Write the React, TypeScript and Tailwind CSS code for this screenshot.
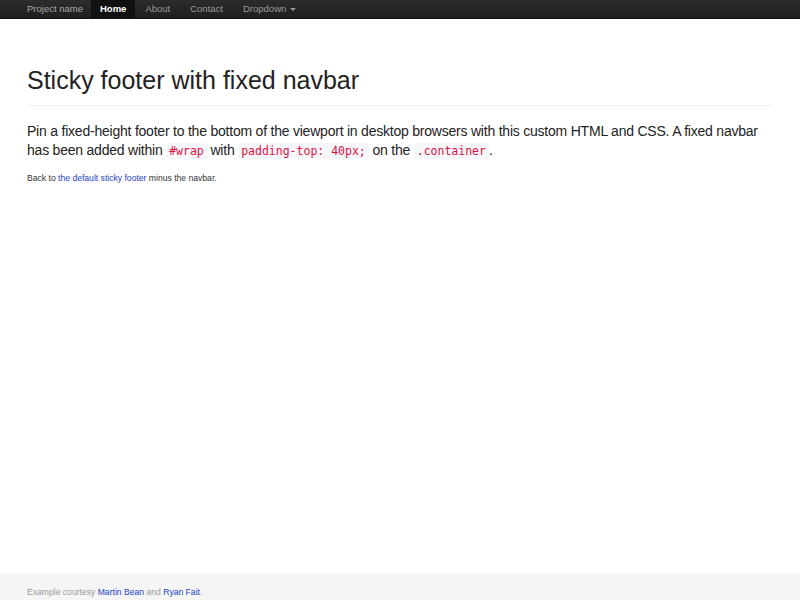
export default function App() {
  const codeCls =
    "inline-block font-['DejaVu_Sans_Mono',monospace] text-[11.5px] leading-[16px] tracking-normal text-[#d14] bg-[#f7f7f9] px-[3px] rounded-[2px] align-baseline";
  return (
    <div className="min-h-screen flex flex-col bg-white text-[#222] font-['Liberation_Sans',Arial,sans-serif]">
      <nav className="fixed top-0 inset-x-0 h-[19px] bg-gradient-to-b from-[#2c2c2c] to-[#1f1f1f] border-b border-[#121212] z-10">
        <div className="flex items-stretch h-full pl-[27px] text-[9.5px] text-[#999]">
          <a className="flex items-center pr-[8px] text-[#aaa]">Project name</a>
          <a className="flex items-center px-[9px] bg-[#111] text-white font-bold">Home</a>
          <a className="flex items-center px-[10px]">About</a>
          <a className="flex items-center px-[10px]">Contact</a>
          <a className="flex items-center px-[10px] gap-[4px]">
            Dropdown
            <span className="inline-block w-0 h-0 border-x-[3px] border-x-transparent border-t-[3px] border-t-[#999]" />
          </a>
        </div>
      </nav>

      <main className="flex-1 pt-[19px]">
        <div className="mx-[27px] pt-[45px]">
          <h1 className="text-[25px] leading-[32px] font-normal pb-[9px] border-b border-[#eee] text-[#222]">
            Sticky footer with fixed navbar
          </h1>
          <p className="mt-[16px] text-[14px] leading-[19px] tracking-[-0.22px] text-[#222]">
            Pin a fixed-height footer to the bottom of the viewport in desktop browsers with this custom HTML and CSS. A fixed navbar has been added within{" "}
            <code className={codeCls}>#wrap</code> with{" "}
            <code className={codeCls}>padding-top: 40px;</code> on the{" "}
            <code className={codeCls}>.container</code>.
          </p>
          <p className="mt-[11px] text-[8.6px] leading-[14px] text-[#333]">
            Back to <a className="text-[#2343c9]">the default sticky footer</a> minus the navbar.
          </p>
        </div>
      </main>

      <footer className="h-[26px] bg-[#f5f5f5] flex items-end pb-[1px]">
        <p className="ml-[27px] text-[8.6px] leading-[14px] text-[#999]">
          Example courtesy <a className="text-[#2343c9]">Martin Bean</a> and <a className="text-[#2343c9]">Ryan Fait</a>.
        </p>
      </footer>
    </div>
  );
}
